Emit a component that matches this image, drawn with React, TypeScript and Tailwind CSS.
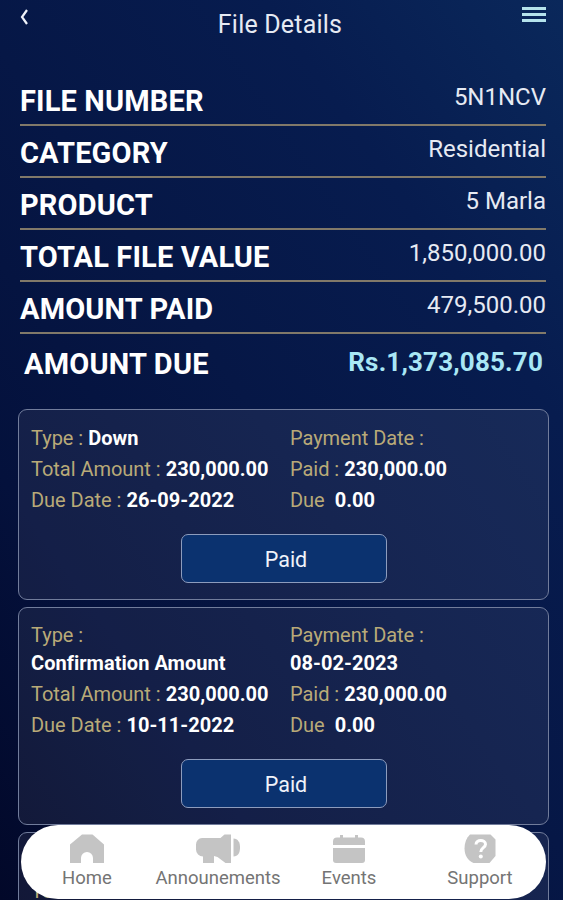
import React from "react";

interface Installment {
    id: number;
    type: string;
    totalAmount: string;
    dueDate: string;
    paymentDate: string;
    paid: string;
    due: string;
}

const summary = [
    { label: "FILE NUMBER", value: "5N1NCV" },
    { label: "CATEGORY", value: "Residential" },
    { label: "PRODUCT", value: "5 Marla" },
    { label: "TOTAL FILE VALUE", value: "1,850,000.00" },
    { label: "AMOUNT PAID", value: "479,500.00" },
];

const installments: Installment[] = [
    { id: 1, type: "Down", totalAmount: "230,000.00", dueDate: "26-09-2022", paymentDate: "", paid: "230,000.00", due: "0.00" },
    { id: 2, type: "Confirmation Amount", totalAmount: "230,000.00", dueDate: "10-11-2022", paymentDate: "08-02-2023", paid: "230,000.00", due: "0.00" },
];

const HomeIcon = () => (
    <svg width="36" height="30" viewBox="0 0 36 30" fill="#c4c4c4">
        <path d="M13 .5h10.500L35 10.500V29H24v-5a6 6 0 0 0-12 0v5H1V10.500z" />
    </svg>
);

const MegaphoneIcon = () => (
    <svg width="46" height="30" viewBox="0 0 46 30" fill="#c4c4c4">
        <path d="M7 4h18.500l4-3.500H36V29h-5.500l-8-6-3.500-1v7H8v-6.500a7 7 0 0 1-7-7V10.500A6.500 6.500 0 0 1 7 4z" />
        <path d="M38.500 4.500C43 5 45 8 45 13.500s-2 8.500-6.500 9z" />
    </svg>
);

const CalendarIcon = () => (
    <svg width="34" height="30" viewBox="0 0 34 30" fill="#c4c4c4">
        <path d="M5 3.500h3V1h3v2.500h12V1h3v2.500h3a4 4 0 0 1 4 4V11H1V7.500a4 4 0 0 1 4-4z" />
        <path d="M1 14h32v12a3 3 0 0 1-3 3H4a3 3 0 0 1-3-3z" />
    </svg>
);

const SupportIcon = () => (
    <svg width="32" height="30" viewBox="0 0 32 30">
        <path d="M6 .5h20.500l5 5V22l-6 7H9.500C4 27 .5 21 .5 14.500.5 8.500 2.500 4 6 .5z" fill="#c4c4c4" />
        <path d="M12 10.500c0-5.500 9.500-5.300 9.500-.3 0 3.500-4.700 3.500-4.700 7.800" fill="none" stroke="white" strokeWidth="3" />
        <circle cx="16.800" cy="22.500" r="2" fill="white" />
    </svg>
);

const navItems = [
    { label: "Home", icon: <HomeIcon /> },
    { label: "Announements", icon: <MegaphoneIcon /> },
    { label: "Events", icon: <CalendarIcon /> },
    { label: "Support", icon: <SupportIcon /> },
];

// Long values move to their own line below the label
const Field = ({ label, value, stacked }: { label: string; value?: string; stacked?: boolean }) => (
    <div>
        <span className="tracking-[-0.03px] text-[#b9aa78]">{label}</span>{" "}
        {value && <span className={`font-bold text-white ${stacked ? "block" : ""}`}>{value}</span>}
    </div>
);

const InstallmentCard = ({ item }: { item: Installment }) => (
    <div className="rounded-[9px] border border-[#717c9b] bg-[#fff3ef]/[0.065] px-[12px] pt-[14.500px] pb-[16px]">
        <div className="flex text-[20px] leading-[27.300px] tracking-[0.04px]">
            <div className="flex w-[259px] flex-col gap-1">
                <Field label="Type :" value={item.type} stacked={item.type.length > 12} />
                <Field label="Total Amount :" value={item.totalAmount} />
                <Field label="Due Date :" value={item.dueDate} />
            </div>
            <div className="flex flex-1 flex-col gap-1">
                <Field label="Payment Date :" value={item.paymentDate} stacked />
                <Field label="Paid :" value={item.paid} />
                <Field label="Due&nbsp;" value={item.due} />
            </div>
        </div>
        <button className="mx-auto mt-[19.600px] block h-[49px] w-[206px] rounded-[7px] border border-[#8d9cbd] bg-[#0b326f] pt-[3px] pl-[5px] text-[21.500px] text-[#f0f3fa]">
            Paid
        </button>
    </div>
);

export default function App() {
    return (
        <div className="relative h-[900px] w-[563px] overflow-hidden bg-[linear-gradient(55deg,#020829_0%,#04113c_25%,#061746_50%,#071c4f_75%,#0a285b_100%)] font-[Roboto,sans-serif]">
            <header className="flex h-[74px] items-start justify-between pr-[17px] pl-[20px]">
                <button className="mt-[9px] w-6" aria-label="Back">
                    <svg width="9" height="16" viewBox="0 0 9 16" fill="none" stroke="#f0f3fa" strokeWidth="2.200">
                        <path d="M7 1 2 8l5 7" />
                    </svg>
                </button>
                <h1 className="mt-[9px] mr-[6px] text-[25px] leading-8 tracking-[0.2px] text-[#e6eaf3]">File Details</h1>
                <button className="mt-[7px] flex w-6 flex-col gap-[3px]" aria-label="Menu">
                    <span className="h-[3px] w-full bg-[#b5e3ec]" />
                    <span className="h-[3px] w-full bg-[#b5e3ec]" />
                    <span className="h-[3px] w-full bg-[#b5e3ec]" />
                </button>
            </header>

            <section className="pr-[17px] pl-[20px]">
                {summary.map((row) => (
                    <div key={row.label} className="flex h-[52px] items-start justify-between border-b-2 border-[#817969]">
                        <span className="mt-[9px] text-[29px] leading-9 font-bold tracking-[0.15px] text-white">{row.label}</span>
                        <span className="mt-[7px] text-[24px] leading-8 text-[#e6eaf3]">{row.value}</span>
                    </div>
                ))}
                <div className="flex h-[75px] items-start justify-between pt-[9px] pr-[3px] pl-1">
                    <span className="mt-[3px] text-[29px] leading-9 font-bold tracking-[0.2px] text-white">AMOUNT DUE</span>
                    <span className="mt-[3px] text-[26px] leading-8 font-bold tracking-[0.17px] text-[#a9e7f5]">Rs.1,373,085.70</span>
                </div>
            </section>

            <main className="flex flex-col gap-[7px] pr-[14px] pl-[18px]">
                {installments.map((item) => (
                    <InstallmentCard key={item.id} item={item} />
                ))}
                <div className="h-[191px] rounded-[9px] border border-[#717c9b] bg-[#fff3ef]/[0.065] px-[12px] pt-[45px] text-[20px] leading-[27px]">
                    <Field label="Total Amount :" />
                </div>
            </main>

            <nav className="absolute bottom-px left-[21px] flex h-[74px] w-[525px] rounded-full bg-white">
                {navItems.map((item) => (
                    <div key={item.label} className="flex w-[131px] flex-col items-center pt-[9px]">
                        {item.icon}
                        <span className="mt-[2px] ml-px text-[18.500px] leading-6 text-[#747474]">{item.label}</span>
                    </div>
                ))}
            </nav>
        </div>
    );
}
